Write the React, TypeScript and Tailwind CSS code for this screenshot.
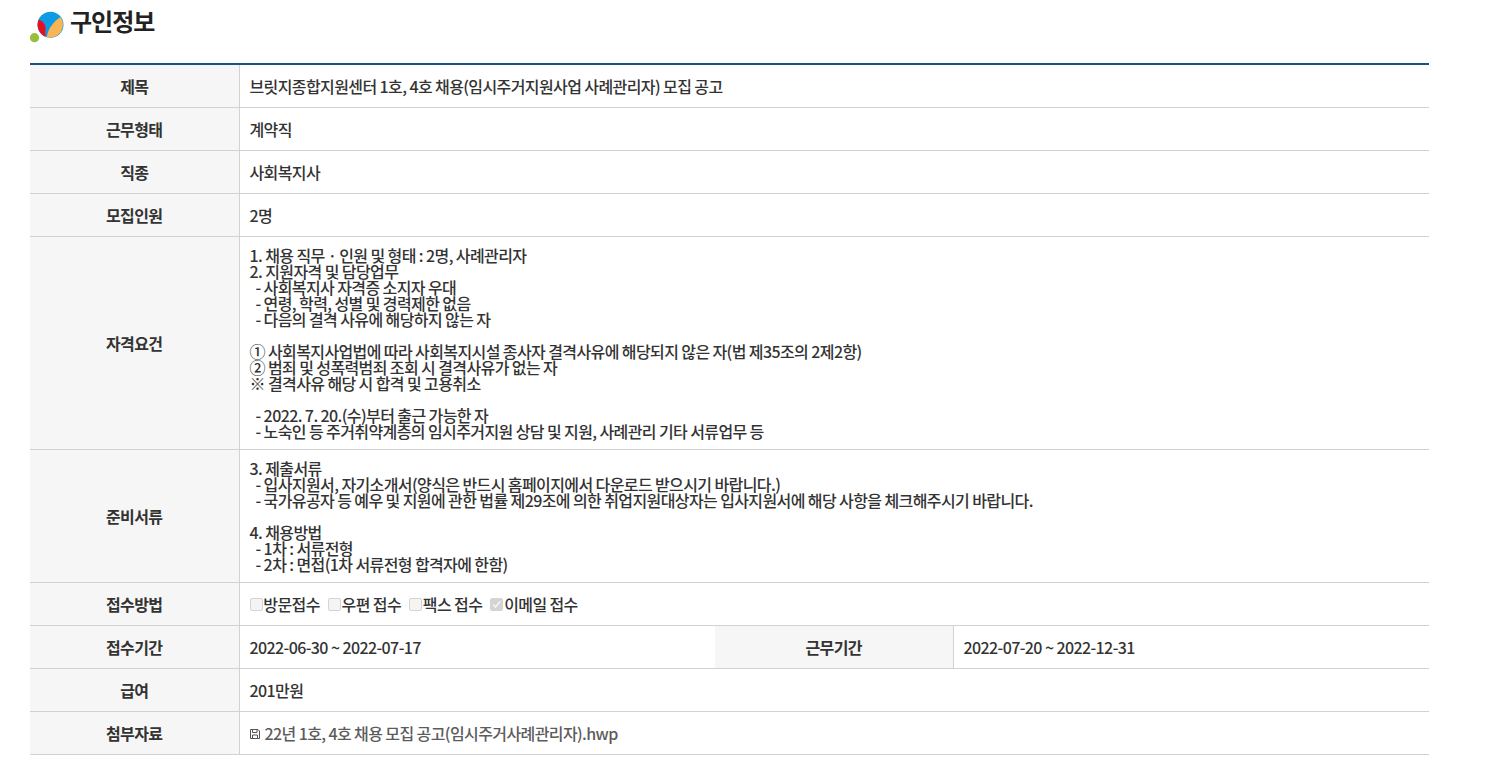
import React from 'react';

const font = "font-['Noto_Sans_CJK_KR','Noto_Sans',sans-serif]";

const qualification = [
  '1. 채용 직무 · 인원 및 형태 : 2명, 사례관리자',
  '2. 지원자격 및 담당업무',
  '  - 사회복지사 자격증 소지자 우대',
  '  - 연령, 학력, 성별 및 경력제한 없음',
  '  - 다음의 결격 사유에 해당하지 않는 자',
  '',
  '① 사회복지사업법에 따라 사회복지시설 종사자 결격사유에 해당되지 않은 자(법 제35조의 2제2항)',
  '② 범죄 및 성폭력범죄 조회 시 결격사유가 없는 자',
  '※ 결격사유 해당 시 합격 및 고용취소',
  '',
  '  - 2022. 7. 20.(수)부터 출근 가능한 자',
  '  - 노숙인 등 주거취약계층의 임시주거지원 상담 및 지원, 사례관리 기타 서류업무 등',
];

const documents = [
  '3. 제출서류',
  '  - 입사지원서, 자기소개서(양식은 반드시 홈페이지에서 다운로드 받으시기 바랍니다.)',
  '  - 국가유공자 등 예우 및 지원에 관한 법률 제29조에 의한 취업지원대상자는 입사지원서에 해당 사항을 체크해주시기 바랍니다.',
  '',
  '4. 채용방법',
  '  - 1차 : 서류전형',
  '  - 2차 : 면접(1차 서류전형 합격자에 한함)',
];

const Logo = () => (
  <svg width="36" height="36" viewBox="0 0 36 36" className="shrink-0">
    <circle cx="20.5" cy="16.7" r="13" fill="#0f9be3" />
    <path d="M16.8 29.2 C18 21 23 14 30.5 9 A13 13 0 0 1 16.8 29.2 Z" fill="#fbb454" />
    <path d="M8.5 12 C12 12 16 16 15.5 21 C15.3 24 15.5 27 15.5 28.7 A13 13 0 0 1 8.5 12 Z" fill="#e60f22" />
    <circle cx="4.5" cy="29.7" r="4.6" fill="#97bf3b" />
  </svg>
);

const Th = ({ children }: { children: React.ReactNode }) => (
  <th className="border-b border-r border-[#d2d2d2] bg-[#f6f6f6] pt-[1px] text-center text-[16px] font-bold text-[#333] align-middle">
    {children}
  </th>
);

const Td = ({ children, colSpan }: { children: React.ReactNode; colSpan?: number }) => (
  <td colSpan={colSpan} className="border-b border-[#d2d2d2] px-[10px] pt-[1px] text-[16px] font-medium text-[#333] align-middle">
    {children}
  </td>
);

const Lines = ({ rows }: { rows: string[] }) => (
  <div className="whitespace-pre leading-[16px]">
    {rows.map((r, i) => (
      <div key={i} className="h-[16px]">{r}</div>
    ))}
  </div>
);

const Check = ({ label, checked }: { label: string; checked?: boolean }) => (
  <span className="flex items-center">
    <span className="mr-[0.8px] flex h-[13px] w-[13px] items-center justify-center rounded-[2px] border border-[#d4d4d4] bg-[#f4f4f4] data-[on=true]:bg-[#d4d4d4]" data-on={checked ? 'true' : 'false'}>
      {checked && (
        <svg width="9" height="9" viewBox="0 0 9 9">
          <path d="M1 4.5 L3.5 7 L8 1.5" fill="none" stroke="#f5f5f5" strokeWidth="1.6" />
        </svg>
      )}
    </span>
    {label}
  </span>
);

const FileIcon = () => (
  <svg width="10" height="10" viewBox="0 0 10 10" className="mr-[5px] inline-block align-[1px]">
    <path d="M0.5 0.5 H8 L9.5 2 V9.5 H0.5 Z" fill="none" stroke="#555" />
    <path d="M2.5 0.5 V3.5 H7 V0.5 M2.5 9.5 V6 H7.5 V9.5" fill="none" stroke="#555" />
  </svg>
);

export default function App() {
  return (
    <div className={`${font} h-[761px] overflow-hidden bg-white pl-[30px] pr-[83px] tracking-[-0.6px]`}>
      <div className="flex h-[63px] items-start">
        <div className="mt-[8px] flex items-start">
          <Logo />
          <h2 className="mt-[-2px] ml-[4px] text-[24px] font-bold leading-[30px] tracking-[-0.96px] text-[#222]">구인정보</h2>
        </div>
      </div>
      <table className="w-full table-fixed border-collapse border-t-2 border-[#1f4e8c]">
        <colgroup>
          <col className="w-[209px]" />
          <col className="w-[476px]" />
          <col className="w-[238px]" />
          <col />
        </colgroup>
        <tbody>
          <tr className="h-[43px]">
            <Th>제목</Th>
            <Td colSpan={3}>브릿지종합지원센터 1호, 4호 채용(임시주거지원사업 사례관리자) 모집 공고</Td>
          </tr>
          <tr className="h-[43px]">
            <Th>근무형태</Th>
            <Td colSpan={3}>계약직</Td>
          </tr>
          <tr className="h-[43px]">
            <Th>직종</Th>
            <Td colSpan={3}>사회복지사</Td>
          </tr>
          <tr className="h-[43px]">
            <Th>모집인원</Th>
            <Td colSpan={3}>2명</Td>
          </tr>
          <tr className="h-[213px]">
            <Th>자격요건</Th>
            <Td colSpan={3}><Lines rows={qualification} /></Td>
          </tr>
          <tr className="h-[133px]">
            <Th>준비서류</Th>
            <Td colSpan={3}><Lines rows={documents} /></Td>
          </tr>
          <tr className="h-[43px]">
            <Th>접수방법</Th>
            <Td colSpan={3}>
              <div className="flex gap-[8px]">
                <Check label="방문접수" />
                <Check label="우편 접수" />
                <Check label="팩스 접수" />
                <Check label="이메일 접수" checked />
              </div>
            </Td>
          </tr>
          <tr className="h-[43px]">
            <Th>접수기간</Th>
            <Td>2022-06-30 ~ 2022-07-17</Td>
            <Th>근무기간</Th>
            <Td>2022-07-20 ~ 2022-12-31</Td>
          </tr>
          <tr className="h-[43px]">
            <Th>급여</Th>
            <Td colSpan={3}>201만원</Td>
          </tr>
          <tr className="h-[43px]">
            <Th>첨부자료</Th>
            <Td colSpan={3}>
              <span className="font-medium text-[#5c5c5c]">
                <FileIcon />
                22년 1호, 4호 채용 모집 공고(임시주거사례관리자).hwp
              </span>
            </Td>
          </tr>
        </tbody>
      </table>
    </div>
  );
}
